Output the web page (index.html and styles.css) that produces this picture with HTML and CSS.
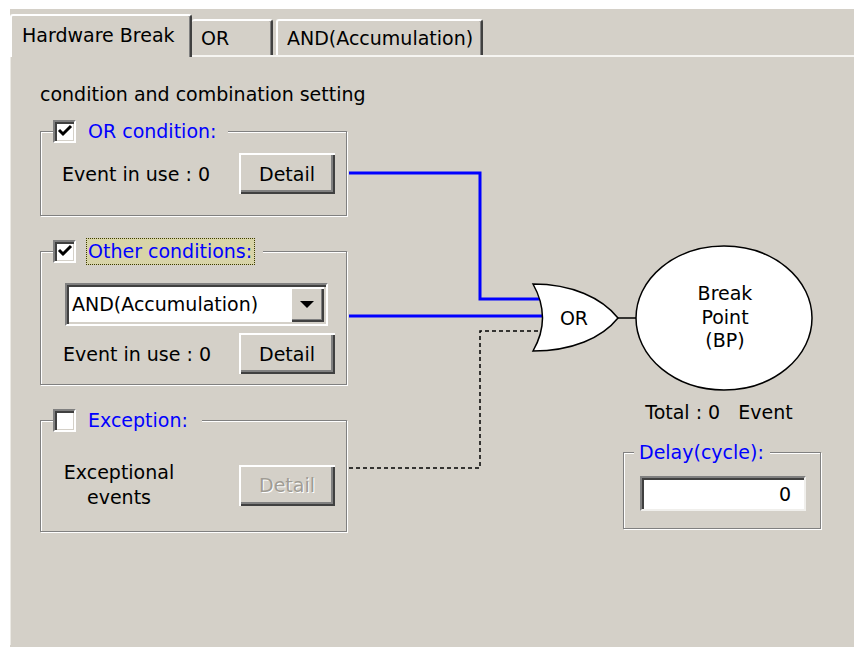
FILE: index.html
```html
<!DOCTYPE html>
<html lang="en">
<head>
    <meta charset="UTF-8">
    <title>Hardware Break</title>
    <link rel="stylesheet" href="styles.css">
</head>
<body>
    <div class="window">
        <div class="tabs">
            <div class="tab active">Hardware Break</div>
            <div class="tab tab-or">OR</div>
            <div class="tab tab-and">AND(Accumulation)</div>
        </div>

        <div class="panel">
            <div class="left">
                <p class="caption">condition and combination setting</p>

                <div class="group group-or">
                    <div class="legend legend-or">
                        <span class="check"><svg viewBox="0 0 18 18" width="18" height="18"><path d="M3 8 L7 12 L15 4" /></svg></span>
                        <span class="legend-text">OR condition:</span>
                    </div>
                    <div class="row">
                        <span class="info">Event in use : 0</span>
                        <button class="btn">Detail</button>
                    </div>
                </div>

                <div class="group group-other">
                    <div class="legend legend-other">
                        <span class="check"><svg viewBox="0 0 18 18" width="18" height="18"><path d="M3 8 L7 12 L15 4" /></svg></span>
                        <span class="legend-text focus">Other conditions:</span>
                    </div>
                    <div class="combo">
                        <span class="combo-value">AND(Accumulation)</span>
                        <span class="combo-btn"><span class="arrow"></span></span>
                    </div>
                    <div class="row">
                        <span class="info">Event in use : 0</span>
                        <button class="btn">Detail</button>
                    </div>
                </div>

                <div class="group group-exc">
                    <div class="legend legend-exc">
                        <span class="check empty"></span>
                        <span class="legend-text">Exception:</span>
                    </div>
                    <div class="row row-exc">
                        <span class="info info-exc">Exceptional<br>events</span>
                        <button class="btn" disabled>Detail</button>
                    </div>
                </div>
            </div>

            <div class="right">
                <p class="total">Total : 0&nbsp;&nbsp; Event</p>
                <div class="group group-delay">
                    <div class="legend legend-delay">
                        <span class="legend-text">Delay(cycle):</span>
                    </div>
                    <div class="field">0</div>
                </div>
            </div>
        </div>

        <!-- wiring diagram, drawn in page coordinates -->
        <svg class="diagram" viewBox="10 9 844 638" width="844" height="638">
            <polyline class="wire" points="349,173 480,173 480,299 545,299" />
            <polyline class="wire" points="349,316 545,316" />
            <polyline class="dash" points="349,468 480,468 480,331 545,331" />
            <path class="gate" d="M533 284 C572 284 602 298 618 318 C602 338 572 351 533 351 Q552 318 533 284 Z" />
            <text class="label" x="574" y="325" text-anchor="middle">OR</text>
            <line class="out" x1="618" y1="318" x2="636" y2="318" />
            <ellipse class="bp" cx="724" cy="318" rx="88" ry="72" />
            <text class="label" x="725" y="300" text-anchor="middle">Break</text>
            <text class="label" x="725" y="324" text-anchor="middle">Point</text>
            <text class="label" x="725" y="347" text-anchor="middle">(BP)</text>
        </svg>
    </div>
</body>
</html>
```

FILE: styles.css
```css
/* General */
body {
    margin: 0;
    background-color: #fff;
    font-family: "DejaVu Sans", Verdana, sans-serif;
    font-size: 19px;
    color: #000;
}

p {
    margin: 0;
}

.window {
    position: relative;
    margin: 9px 0 0 10px;
    height: 638px;
    background-color: #d4d0c8;
    overflow: hidden;
}

/* Tabs */
.tabs {
    display: flex;
    align-items: flex-end;
    height: 46px;
}

.tab {
    box-sizing: border-box;
    height: 36px;
    padding: 6px 0 0 9px;
    border-top: 2px solid #fff;
    border-left: 2px solid #fff;
    border-right: 2px solid #404040;
    border-radius: 3px 3px 0 0;
    box-shadow: inset -1px 0 0 #808080;
    white-space: nowrap;
}

.tab.active {
    position: relative;
    z-index: 1;
    width: 182px;
    height: 43px;
    margin-bottom: -2px;
    padding: 8px 0 0 10px;
    background-color: #d4d0c8;
}

.tab-or {
    width: 81px;
    border-left: none;
}

.tab-and {
    width: 207px;
    margin-left: 3px;
}

/* Panel */
.panel {
    display: flex;
    height: 590px;
    border-top: 2px solid #f6f5f2;
    border-left: 1px solid #eceae5;
    box-sizing: border-box;
    padding-top: 26px;
}

.left {
    width: 307px;
    margin-left: 29px;
}

.caption {
    height: 22px;
    line-height: 22px;
    white-space: nowrap;
}

/* Group boxes */
.group {
    position: relative;
    box-sizing: border-box;
    border: 1px solid #808080;
    box-shadow: 1px 1px 0 #fff, inset 1px 1px 0 #fff;
}

.group-or {
    margin-top: 26px;
    height: 85px;
}

.group-other {
    margin-top: 35px;
    height: 134px;
}

.group-exc {
    margin-top: 35px;
    height: 112px;
}

.legend {
    position: absolute;
    top: -13px;
    left: 12px;
    display: flex;
    align-items: center;
    gap: 12px;
    height: 24px;
    background-color: #d4d0c8;
    white-space: nowrap;
}

.legend-or { padding-right: 12px; }
.legend-other { gap: 10px; padding-right: 8px; }
.legend-exc { padding-right: 14px; }

.legend-text {
    color: #0000ff;
}

.legend-text.focus {
    padding: 1px 2px 2px 1px;
    border: 1px dotted #3a3a00;
    background-color: #d8d4a8;
}

.check {
    box-sizing: border-box;
    display: flex;
    align-items: center;
    justify-content: center;
    width: 23px;
    height: 23px;
    background-color: #fff;
    border: 2px solid;
    border-color: #808080 #fff #fff #808080;
    box-shadow: inset 2px 2px 0 #404040, inset -1px -1px 0 #d4d0c8;
}

.check svg path {
    fill: none;
    stroke: #000;
    stroke-width: 3;
}

.row {
    display: flex;
    align-items: center;
    justify-content: space-between;
    padding: 21px 11px 0 21px;
    white-space: nowrap;
}

.group-other .row {
    padding-top: 7px;
    padding-left: 22px;
}

.row-exc {
    padding-top: 39px;
    padding-left: 21px;
}

.info-exc {
    width: 114px;
    text-align: center;
    line-height: 25px;
}

/* Buttons */
.btn {
    box-sizing: border-box;
    width: 96px;
    height: 41px;
    padding: 0;
    border: none;
    background-color: #d4d0c8;
    font-family: inherit;
    font-size: 19px;
    color: #000;
    box-shadow: inset 2px 2px 0 #fff, inset -2px -2px 0 #404040, inset -4px -4px 0 #808080;
}

.btn:disabled {
    color: #a09c94;
    text-shadow: 1px 1px 0 #fff;
}

/* Combo box */
.combo {
    display: flex;
    box-sizing: border-box;
    width: 263px;
    height: 43px;
    margin: 31px 0 0 24px;
    background-color: #fff;
    border: 2px solid;
    border-color: #808080 #fff #fff #808080;
    box-shadow: inset 2px 2px 0 #404040, inset -2px -2px 0 #d4d0c8;
}

.combo-value {
    flex: 1;
    padding: 8px 0 0 5px;
    white-space: nowrap;
}

.combo-btn {
    display: flex;
    align-items: center;
    justify-content: center;
    box-sizing: border-box;
    width: 34px;
    margin: 2px 2px 2px 0;
    background-color: #d4d0c8;
    box-shadow: inset 2px 2px 0 #fff, inset -2px -2px 0 #404040, inset -3px -3px 0 #808080;
}

.arrow {
    width: 0;
    height: 0;
    border-left: 7px solid transparent;
    border-right: 7px solid transparent;
    border-top: 7px solid #000;
}

/* Right column */
.right {
    width: 198px;
    margin-left: 276px;
    margin-top: 318px;
}

.total {
    height: 22px;
    line-height: 22px;
    text-align: center;
    margin-left: -6px;
    white-space: nowrap;
}

.group-delay {
    margin-top: 29px;
    height: 77px;
}

.legend-delay {
    left: 10px;
    padding: 0 6px 0 5px;
}

.field {
    box-sizing: border-box;
    width: 166px;
    height: 35px;
    margin: 23px 0 0 16px;
    padding: 5px 13px 0 0;
    text-align: right;
    background-color: #fff;
    border: 2px solid;
    border-color: #808080 #f0efec #f0efec #808080;
    box-shadow: inset 2px 2px 0 #404040;
}

/* Diagram */
.diagram {
    position: absolute;
    left: 0;
    top: 0;
    pointer-events: none;
}

.wire {
    fill: none;
    stroke: #0000ff;
    stroke-width: 3;
}

.dash {
    fill: none;
    stroke: #000;
    stroke-width: 1.5;
    stroke-dasharray: 4 3;
}

.gate, .bp {
    fill: #fff;
    stroke: #000;
    stroke-width: 1.5;
}

.out {
    stroke: #000;
    stroke-width: 1.5;
}

.label {
    font-family: "DejaVu Sans", Verdana, sans-serif;
    font-size: 19px;
}
```
